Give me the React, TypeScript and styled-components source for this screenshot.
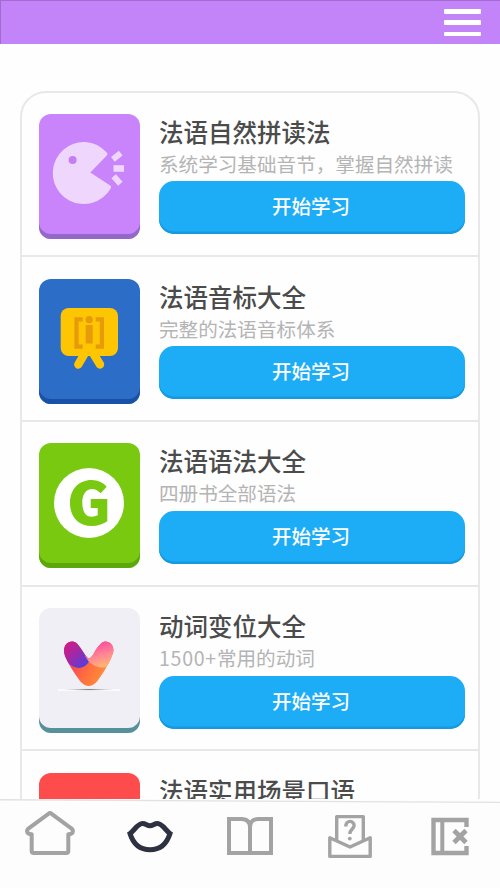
import React from 'react';
import styled, { createGlobalStyle } from 'styled-components';

const GlobalStyle = createGlobalStyle`
  * { box-sizing: border-box; }
  body {
    margin: 0;
    background: #fefefe;
    font-family: "Noto Sans CJK SC", sans-serif;
    overflow: hidden;
  }
`;

const Screen = styled.div`
  display: flex;
  flex-direction: column;
  width: 500px;
  height: 888px;
  overflow: hidden;
`;

const Header = styled.header`
  flex: none;
  height: 44px;
  display: flex;
  justify-content: flex-end;
  align-items: flex-start;
  padding: 8px 19px 0 0;
  background: #c484f9;
  box-shadow: inset 1px 1px 0 #a26bd0;
`;

const MenuButton = styled.button`
  display: flex;
  flex-direction: column;
  justify-content: space-between;
  width: 37px;
  height: 28px;
  padding: 1px 0 0;
  border: 0;
  background: none;
`;

const MenuBar = styled.span`
  height: 4.5px;
  border-radius: 1px;
  background: #fff;
`;

const Content = styled.main`
  flex: none;
  height: 755px;
  padding: 47px 20px 0;
  overflow: hidden;
`;

const CourseList = styled.section`
  border: 2px solid #e8e8e8;
  border-radius: 26px;
`;

const CourseRow = styled.article`
  display: flex;
  gap: 19px;
  height: 164.8px;
  padding: 21px 14px 0 17px;
  border-bottom: 2px solid #e8e8e8;

  &:first-child {
    height: 164px;
  }

  &:not(:first-child) {
    padding-top: 21.6px;
  }
`;

const Tile = styled.div<{ $color: string; $edge: string }>`
  flex: none;
  width: 101px;
  height: 125px;
  border-radius: 12px;
  background: ${(p) => p.$color};
  box-shadow: inset 0 -5px 0 ${(p) => p.$edge};
`;

const TileArt = styled.svg`
  display: block;
  width: 101px;
  height: 125px;
`;

const CourseBody = styled.div`
  flex: 1;
  min-width: 0;
`;

const Title = styled.h2`
  margin: 0;
  height: 36px;
  font-size: 24.5px;
  line-height: 36px;
  font-weight: 500;
  color: #4b4b4b;
  white-space: nowrap;
`;

const Subtitle = styled.p`
  margin: 0;
  height: 31.4px;
  font-size: 19.6px;
  line-height: 28px;
  color: #b4b4b4;
  white-space: nowrap;
`;

const Digits = styled.span`
  letter-spacing: 0.7px;
`;

const StartButton = styled.button`
  display: block;
  width: 306px;
  height: 53px;
  padding: 0 2px 3px 0;
  border: 0;
  border-radius: 15px;
  background: #1dadf7;
  box-shadow: inset 0 -2.5px 0 #1899dd;
  color: #fff;
  font-family: inherit;
  font-size: 19.5px;
  font-weight: 500;
  line-height: 50px;
`;

const NavBar = styled.nav`
  position: relative;
  flex: 1;
  display: flex;
  background: #fdfdfd;
`;

const NavEdge = styled.svg`
  position: absolute;
  top: 0;
  left: 0;
  width: 500px;
  height: 5px;
`;

const NavItem = styled.a`
  flex: 1;
  display: block;
`;

const NavIcon = styled.svg<{ $active?: boolean }>`
  display: block;
  width: 100px;
  height: 89px;
  fill: none;
  stroke: ${(p) => (p.$active ? '#2e3142' : '#a3a3a3')};
  stroke-width: ${(p) => (p.$active ? 5 : 4)};
`;

const PhonicsArt = () => (
  <TileArt viewBox="0 0 101 125">
    <path
      d="M67.8 38.6 Q69.3 40 67.8 41.4 L51.3 58.6 L71.2 71.4 Q72.8 72.5 71.8 74.2 A31 31 0 1 1 58 31 Q63.5 33.8 67.8 38.6Z"
      fill="#eed6fd"
    />
    <circle cx="33.6" cy="46" r="4" fill="#c37df5" />
    <g fill="#eed6fd">
      <rect x="-5" y="-3" width="10" height="6" transform="translate(77.8 42.3) rotate(-38)" />
      <rect x="74.5" y="51.2" width="10.5" height="6.6" />
      <rect x="-5" y="-3" width="10" height="6" transform="translate(78 66) rotate(48)" />
    </g>
  </TileArt>
);

const PhoneticArt = () => (
  <TileArt viewBox="0 0 101 125">
    <path d="M46 74 L39.3 85.5 M54 74 L61 85.5" stroke="#fdc502" strokeWidth="8.4" strokeLinecap="round" />
    <rect x="21.7" y="29" width="57.3" height="48" rx="8" fill="#fdc502" />
    <path d="M43.7 40.3 H37.5 V67.7 H43.7 M56.7 40.3 H62.9 V67.7 H56.7" fill="none" stroke="#e79a0a" strokeWidth="4.2" />
    <rect x="46.7" y="46" width="7" height="18.5" fill="#e79a0a" />
    <circle cx="50.2" cy="40.7" r="3.6" fill="#e79a0a" />
  </TileArt>
);

const GrammarArt = () => (
  <TileArt viewBox="0 0 101 125">
    <circle cx="50" cy="60" r="35" fill="#fff" />
    <path
      d="M67.7 43.7 L61.7 50.3 Q57.5 46 53.3 46 C46.5 46 43.3 52 43.3 59.3 C43.3 68.5 46.5 73.7 52.7 73.7 Q56.5 73.7 58.7 72.3 V65 H51.7 V56 H68.3 V78.3 Q61.5 83 52.7 83 C39.5 83 31 74 31 60 C31 46 40 37 52.7 37 Q62 37 67.7 43.7Z"
      fill="#78c90f"
    />
  </TileArt>
);

const VerbArt = () => (
  <TileArt viewBox="0 0 101 125">
    <defs>
      <linearGradient id="verbBase" x1="0" y1="0" x2="1" y2="0.5">
        <stop offset="0.2" stopColor="#e83370" />
        <stop offset="0.6" stopColor="#ff6a40" />
        <stop offset="1" stopColor="#ff9a38" />
      </linearGradient>
      <linearGradient id="verbLeft" x1="0" y1="0" x2="1" y2="1">
        <stop offset="0.1" stopColor="#dc177e" />
        <stop offset="0.5" stopColor="#a428a5" />
        <stop offset="0.9" stopColor="#553ddd" />
      </linearGradient>
      <linearGradient id="verbRight" x1="0.4" y1="0" x2="0.7" y2="1">
        <stop offset="0.1" stopColor="#f83fa2" />
        <stop offset="0.6" stopColor="#ff8893" />
        <stop offset="1" stopColor="#ffbd70" />
      </linearGradient>
      <radialGradient id="verbShadow">
        <stop offset="0" stopColor="#777" />
        <stop offset="1" stopColor="#aaa" stopOpacity="0" />
      </radialGradient>
      <clipPath id="verbShape">
        <path d="M26 48 C22 37 31 30 38 35.5 Q42 40 45.5 46 Q48 50 50 50.3 Q52 50 54.5 46 Q58 39 62 35.5 C68 30 77.5 37 73.5 46.5 Q70 57 58.5 73 Q49.7 83 41 73 Q30 58 26 48Z" />
      </clipPath>
    </defs>
    <g clipPath="url(#verbShape)">
      <rect x="22" y="30" width="56" height="52" fill="url(#verbBase)" />
      <path d="M22 30 H42 L50 54 Q42 64 31.5 57 L22 50Z" fill="url(#verbLeft)" />
      <path d="M58 28 H78 V52 Q65 66 50 54 L46 48Z" fill="url(#verbRight)" />
    </g>
    <rect x="19" y="81" width="62" height="2" fill="#fff" opacity="0.7" />
    <ellipse cx="50" cy="81.6" rx="26" ry="1.2" fill="url(#verbShadow)" />
  </TileArt>
);

type Course = {
  title: string;
  digits?: string;
  subtitle?: string;
  color: string;
  edge: string;
  art?: React.ReactNode;
};

const courses: Course[] = [
  { title: '法语自然拼读法', subtitle: '系统学习基础音节，掌握自然拼读', color: '#c984fc', edge: '#9269c9', art: <PhonicsArt /> },
  { title: '法语音标大全', subtitle: '完整的法语音标体系', color: '#2c6dc8', edge: '#1951a6', art: <PhoneticArt /> },
  { title: '法语语法大全', subtitle: '四册书全部语法', color: '#78c90f', edge: '#5ca70b', art: <GrammarArt /> },
  { title: '动词变位大全', digits: '1500+', subtitle: '常用的动词', color: '#f0eff6', edge: '#578f9b', art: <VerbArt /> },
  { title: '法语实用场景口语', color: '#fe4b4b', edge: '#d63a3a' },
];

const HomeIcon = () => (
  <NavIcon viewBox="0 799 100 89">
    <path
      strokeLinejoin="round"
      d="M48.4 813.8 Q50 812.5 51.6 813.8 L71.3 828.3 Q73.6 830.3 72.6 832.5 Q71.6 834.3 68.3 834.3 V851 Q68.3 853 66.3 853 H33.7 Q31.7 853 31.7 851 V834.3 Q28.4 834.3 27.4 832.5 Q26.4 830.3 28.7 828.3Z"
    />
  </NavIcon>
);

const LipsIcon = () => (
  <NavIcon $active viewBox="100 799 100 89">
    <path d="M130 833.5 C134 831 137.5 823.6 142.5 823.6 C146 823.6 147 825.7 150 825.7 C153 825.7 154 823.6 157.5 823.6 C162.5 823.6 166 831 170 833.5 Q165 849.7 150 849.7 Q135 849.7 130 833.5Z" />
  </NavIcon>
);

const BookIcon = () => (
  <NavIcon viewBox="200 799 100 89">
    <path d="M229 819 H241.5 Q250 819 250 827.5 Q250 819 258.5 819 H271 V853 H229Z M250 826 V853" />
  </NavIcon>
);

const QuizIcon = () => (
  <NavIcon viewBox="300 799 100 89">
    <g strokeWidth="3.4" strokeLinejoin="round">
      <path d="M336.7 840.5 V816.6 H363.3 V840.5" />
      <path d="M329.8 837.8 L350 847 L370.2 837.8 V856.4 H329.8Z" />
      <path d="M345.8 826.5 C345.8 819.5 354.5 820 354 826 C353.5 829.5 349.8 829.5 349.8 834" />
    </g>
    <circle cx="349.8" cy="838.6" r="1.9" fill="#a3a3a3" stroke="none" />
  </NavIcon>
);

const NotebookIcon = () => (
  <NavIcon viewBox="400 799 100 89">
    <path d="M466.5 827 V820 H433.5 V853 H466.5 V846" strokeWidth="4.4" />
    <path d="M442.3 820 V853" />
    <path strokeWidth="4.8" d="M454 830.5 L466 842.5 M466 830.5 L454 842.5" />
  </NavIcon>
);

export default function App() {
  return (
    <Screen>
      <GlobalStyle />
      <Header>
        <MenuButton aria-label="菜单">
          <MenuBar />
          <MenuBar />
          <MenuBar />
        </MenuButton>
      </Header>
      <Content>
        <CourseList>
          {courses.map((course) => (
            <CourseRow key={course.title}>
              <Tile $color={course.color} $edge={course.edge}>{course.art}</Tile>
              <CourseBody>
                <Title>{course.title}</Title>
                {course.subtitle && (
                  <>
                    <Subtitle>
                      {course.digits && <Digits>{course.digits}</Digits>}
                      {course.subtitle}
                    </Subtitle>
                    <StartButton>开始学习</StartButton>
                  </>
                )}
              </CourseBody>
            </CourseRow>
          ))}
        </CourseList>
      </Content>
      <NavBar>
        <NavEdge viewBox="0 0 500 5">
          <path d="M0 0.8 Q250 2 500 3.4" fill="none" stroke="#e2e2e2" strokeWidth="1.4" />
        </NavEdge>
        <NavItem><HomeIcon /></NavItem>
        <NavItem><LipsIcon /></NavItem>
        <NavItem><BookIcon /></NavItem>
        <NavItem><QuizIcon /></NavItem>
        <NavItem><NotebookIcon /></NavItem>
      </NavBar>
    </Screen>
  );
}
